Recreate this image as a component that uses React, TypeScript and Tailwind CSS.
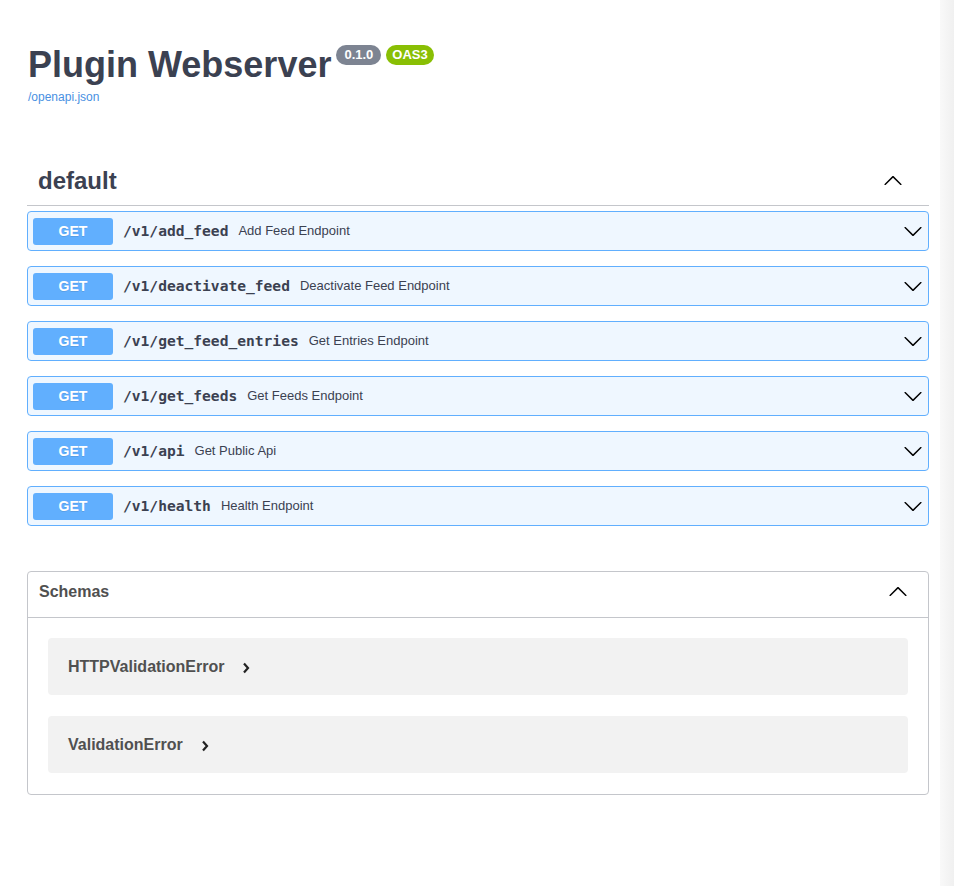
import React from 'react';

const sans = { fontFamily: '"Liberation Sans", Arial, sans-serif' };

type Endpoint = { path: string; summary: string };

const endpoints: Endpoint[] = [
  { path: '/v1/add_feed', summary: 'Add Feed Endpoint' },
  { path: '/v1/deactivate_feed', summary: 'Deactivate Feed Endpoint' },
  { path: '/v1/get_feed_entries', summary: 'Get Entries Endpoint' },
  { path: '/v1/get_feeds', summary: 'Get Feeds Endpoint' },
  { path: '/v1/api', summary: 'Get Public Api' },
  { path: '/v1/health', summary: 'Health Endpoint' },
];

const schemas = ['HTTPValidationError', 'ValidationError'];

function Arrow({ up = false }: { up?: boolean }) {
  return (
    <svg
      width="20"
      height="20"
      viewBox="0 0 20 20"
      className={up ? 'shrink-0 rotate-180' : 'shrink-0'}
      aria-hidden="true"
    >
      <path
        fill="#000"
        d="M17.418 6.109c.272-.268.709-.268.979 0s.271.701 0 .969l-7.908 7.83c-.27.268-.707.268-.979 0l-7.908-7.83c-.27-.268-.27-.701 0-.969.271-.268.709-.268.979 0L10 13.25l7.418-7.141z"
      />
    </svg>
  );
}

function OpBlock({ op }: { op: Endpoint }) {
  return (
    <div className="flex items-center h-[40px] pl-[5px] pr-[5px] rounded-[4px] border border-[#61affe] bg-[#eff7ff]">
      <span className="w-[80px] h-[27px] flex items-center justify-center rounded-[3px] bg-[#61affe] text-white text-[14px] font-bold [text-shadow:0_1px_0_rgba(0,0,0,0.1)]">
        GET
      </span>
      <span
        className="ml-[10px] text-[14.6px] font-bold text-[#3b4151]"
        style={{ fontFamily: '"DejaVu Sans Mono", "Liberation Mono", monospace' }}
      >
        {op.path}
      </span>
      <span className="ml-[10px] text-[13px] text-[#3b4151]">{op.summary}</span>
      <span className="flex-1" />
      <Arrow />
    </div>
  );
}

export default function App() {
  return (
    <div className="flex min-h-[886px] bg-white" style={sans}>
      <main className="flex-1 pl-[27px] pr-[11px] pb-[60px]">
        {/* Info */}
        <div className="pt-[44px]">
          <div className="flex items-start">
            <h2 className="ml-[1px] text-[36px] leading-[41px] font-bold text-[#3b4151]">Plugin Webserver</h2>
            <span className="ml-[5px] mt-[1px] h-[20px] px-[8px] flex items-center rounded-full bg-[#7d8492] text-white text-[13px] font-bold">
              0.1.0
            </span>
            <span className="ml-[5px] mt-[1px] h-[20px] px-[6px] flex items-center rounded-full bg-[#89bf04] text-white text-[13px] font-bold">
              OAS3
            </span>
          </div>
          <a className="block ml-[1px] mt-[5px] text-[12px] leading-[14px] text-[#4990e2]">/openapi.json</a>
        </div>

        {/* default tag */}
        <section className="mt-[53px]">
          <div className="flex items-center pl-[11px] pr-[26px] pt-[12px] pb-[12px] border-b border-[#c4c6cb]">
            <h3 className="flex-1 text-[24px] leading-[24px] font-bold text-[#3b4151]">default</h3>
            <Arrow up />
          </div>
          <div className="mt-[5px] flex flex-col gap-[15px]">
            {endpoints.map((op) => (
              <OpBlock key={op.path} op={op} />
            ))}
          </div>
        </section>

        {/* Schemas */}
        <section className="mt-[45px] rounded-[4px] border border-[#c4c6cb]">
          <div className="flex items-center h-[46px] pl-[11px] pr-[20px] pb-[5px] border-b border-[#c4c6cb]">
            <h4 className="flex-1 text-[16px] font-bold text-[#505050]">Schemas</h4>
            <Arrow up />
          </div>
          <div className="flex flex-col gap-[21px] px-[20px] pt-[20px] pb-[21px]">
            {schemas.map((name) => (
              <div key={name} className="flex items-center h-[57px] pl-[20px] rounded-[4px] bg-[#f2f2f2]">
                <span className="text-[16px] font-bold text-[#505050]">{name}</span>
                <svg width="8" height="12" viewBox="0 0 8 12" className="ml-[18px] mt-[3px]" aria-hidden="true">
                  <polyline points="2,1.5 6,6 2,10.5" fill="none" stroke="#222" strokeWidth="2.2" />
                </svg>
              </div>
            ))}
          </div>
        </section>
      </main>
      <div className="w-[14px] shrink-0 bg-gradient-to-r from-[#f9f9f9] to-[#f0f0f0]" />
    </div>
  );
}
